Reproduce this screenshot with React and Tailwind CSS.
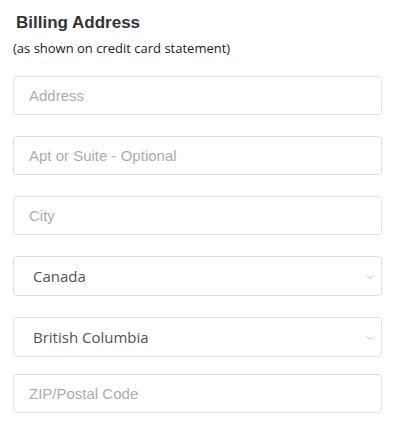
import { ChevronDown } from 'lucide-react'

const sans = "font-['Liberation_Sans',Arial,sans-serif]"
const open = "font-['Open_Sans','Noto_Sans',sans-serif]"

function Field({ placeholder }) {
  return (
    <input
      placeholder={placeholder}
      className={`block w-[369px] h-[39px] rounded border border-[#dcdfe3] bg-white px-[15px] text-[15px] text-[#555] placeholder:text-[#a9adb2] outline-none ${sans}`}
    />
  )
}

function SelectBox({ value }) {
  return (
    <div className="relative w-[369px] h-[40px] rounded border border-[#dcdfe3] bg-white">
      <select
        defaultValue={value}
        className={`appearance-none w-full h-full bg-transparent pl-[19px] pr-8 text-[15px] text-[#505459] outline-none ${open}`}
      >
        <option>{value}</option>
      </select>
      <ChevronDown size={12} strokeWidth={1.4} className="absolute right-[5px] top-[14px] text-[#a0a0a0] pointer-events-none" />
    </div>
  )
}

export default function App() {
  return (
    <div className="w-[400px] h-[427px] bg-white pl-[13px] pt-[13px]">
      <h2 className={`pl-[3px] text-[17px] font-bold text-[#333] leading-[20px] ${sans}`}>Billing Address</h2>
      <p className={`mt-[7px] text-[13px] text-[#222] leading-[16px] ${open}`}>(as shown on credit card statement)</p>
      <div className="mt-[20px] flex flex-col gap-[21px]">
        <Field placeholder="Address" />
        <Field placeholder="Apt or Suite - Optional" />
        <Field placeholder="City" />
        <SelectBox value="Canada" />
        <SelectBox value="British Columbia" />
      </div>
      <div className="mt-[17px]">
        <Field placeholder="ZIP/Postal Code" />
      </div>
    </div>
  )
}
